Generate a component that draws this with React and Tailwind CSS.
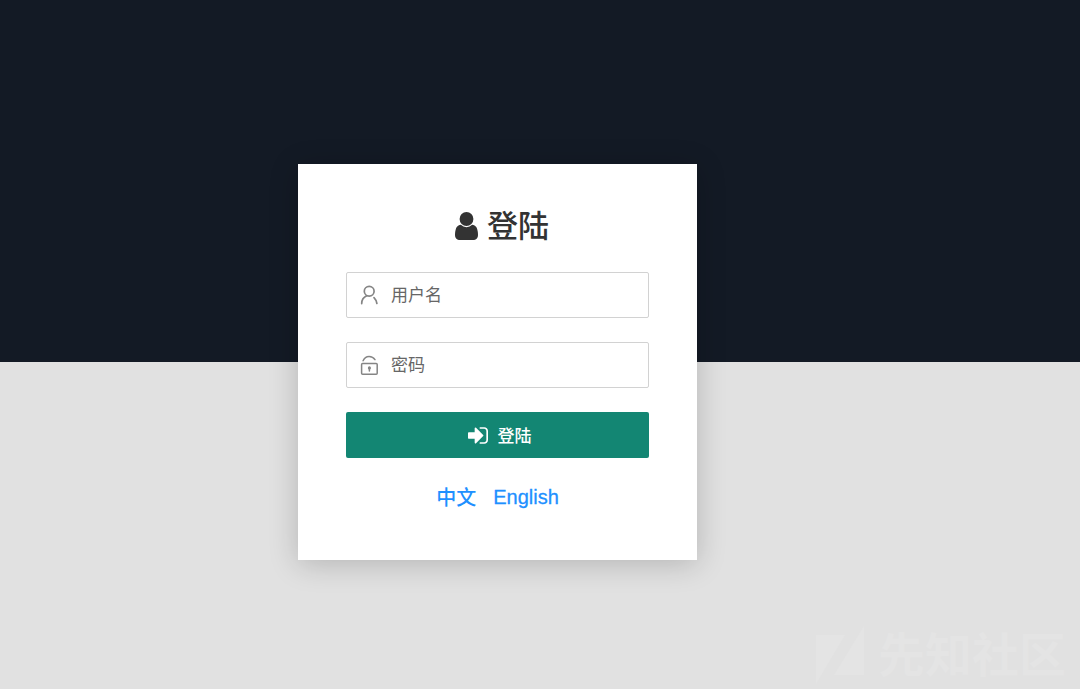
import React from "react";

function PersonIcon() {
  return (
    <svg className="h-[28px] w-[23px] shrink-0" viewBox="0 128 1280 1536" preserveAspectRatio="none" fill="currentColor" aria-hidden="true">
      <path d="M1280 1399q0 109-62.5 187t-150.5 78h-854q-88 0-150.5-78t-62.5-187q0-85 8.5-160.5t31.5-152 58.5-131 94-89 134.5-34.5q131 128 313 128t313-128q76 0 134.5 34.5t94 89 58.5 131 31.5 152 8.5 160.5zM1024 512q0 159-112.5 271.5t-271.5 112.5-271.5-112.5-112.5-271.5 112.5-271.5 271.5-112.5 271.5 112.5 112.5 271.5z" />
    </svg>
  );
}

function SignInIcon() {
  return (
    <svg className="mt-px h-[17px] w-[20px] shrink-0" viewBox="0 256 1536 1280" fill="currentColor" aria-hidden="true">
      <path d="M1184 896q0 26-19 45l-544 544q-19 19-45 19t-45-19-19-45v-288h-448q-26 0-45-19t-19-45v-384q0-26 19-45t45-19h448v-288q0-26 19-45t45-19 45 19l544 544q19 19 19 45zm352-352v704q0 119-84.5 203.5t-203.5 84.5h-320q-13 0-22.5-9.5t-9.5-22.5q0-4-1-20t-.5-26.5 3-23.5 10-19.5 20.5-6.5h320q66 0 113-47t47-113v-704q0-66-47-113t-113-47h-312l-11.5-1-11.5-3-8-5.5-7-9-2-13.5q0-4-1-20t-.5-26.5 3-23.5 10-19.5 20.5-6.5h320q119 0 203.5 84.5t84.5 203.5z" />
    </svg>
  );
}

function UsernameIcon() {
  return (
    <svg className="h-5 w-[18px] shrink-0" viewBox="0 0 18 20" fill="none" stroke="#858585" strokeWidth="1.7" strokeLinecap="round" aria-hidden="true">
      <circle cx="9.2" cy="6.2" r="4.9" />
      <path d="M6.8 10.8C3.9 12 1.7 15 1.7 18.6M14 12.6c1.5 1.5 2.5 3.6 2.9 5.9" />
    </svg>
  );
}

function PasswordIcon() {
  return (
    <svg className="h-5 w-[18px] shrink-0" viewBox="0 0 18 20" fill="none" stroke="#858585" strokeWidth="1.5" strokeLinecap="round" aria-hidden="true">
      <rect x="1.6" y="8.6" width="15.6" height="10.6" rx="1" />
      <path d="M3.1 5.8C4.2 3.1 6.3 1.5 9.1 1.5c2.5 0 4.6 1.2 5.9 3.2" />
      <path d="M9.4 13.7v2.2" />
      <circle cx="9.4" cy="12.9" r="0.8" fill="#858585" />
    </svg>
  );
}

function Field({ icon, label, type }) {
  return (
    <label className="flex h-[46px] items-center gap-3 rounded-[2px] border border-[#d2d2d2] bg-white pl-[13px]">
      {icon}
      <input type={type} placeholder={label} aria-label={label} className="min-w-0 flex-1 bg-transparent pt-[2px] pl-px text-[17px] leading-6 text-[#333] outline-none placeholder:text-[#666]" />
    </label>
  );
}

function Watermark() {
  return (
    <div className="absolute right-[14px] bottom-[3px] flex items-center gap-[14px] text-[#e4e4e4]" aria-hidden="true">
      <svg className="h-[60px] w-[49px]" viewBox="0 0 49 60" fill="currentColor">
        <path d="M1 9h29L1 58zM49 0v49H19z" />
      </svg>
      <span className="text-[47px] leading-[60px] font-bold">先知社区</span>
    </div>
  );
}

export default function App() {
  return (
    <div className="relative h-screen min-h-[689px] overflow-hidden bg-[linear-gradient(#131a25_362px,#e1e1e1_362px)] pt-[164px] pl-[298px] font-['Liberation_Sans','Noto_Sans_CJK_SC',sans-serif]">
      <main className="h-[396px] w-[399.4px] bg-white pt-[40px] pr-[48.4px] pl-12 shadow-[0_4px_28px_rgba(0,0,0,0.2)]">
        <h1 className="flex h-[44px] items-center justify-center gap-[9px] pl-[9px] text-[31px] leading-[44px] font-medium text-[#333]">
          <PersonIcon />
          <span className="pt-[2px]">登陆</span>
        </h1>
        <form className="mt-6 flex flex-col gap-6" onSubmit={(e) => e.preventDefault()}>
          <Field icon={<UsernameIcon />} label="用户名" type="text" />
          <Field icon={<PasswordIcon />} label="密码" type="password" />
          <button className="flex h-[46px] items-center justify-center gap-[10px] rounded-[2px] bg-[#138673] pl-[4px] text-[17px] leading-6 font-medium text-white">
            <SignInIcon />
            <span className="pt-[3px]">登陆</span>
          </button>
        </form>
        <nav className="mt-[24px] flex justify-center gap-[17px] text-[20px] leading-[30px] text-[#1e90ff]">
          <a href="#zh" className="pt-px font-medium">中文</a>
          <a href="#en" className="[-webkit-text-stroke:0.3px]">English</a>
        </nav>
      </main>
      <Watermark />
    </div>
  );
}
